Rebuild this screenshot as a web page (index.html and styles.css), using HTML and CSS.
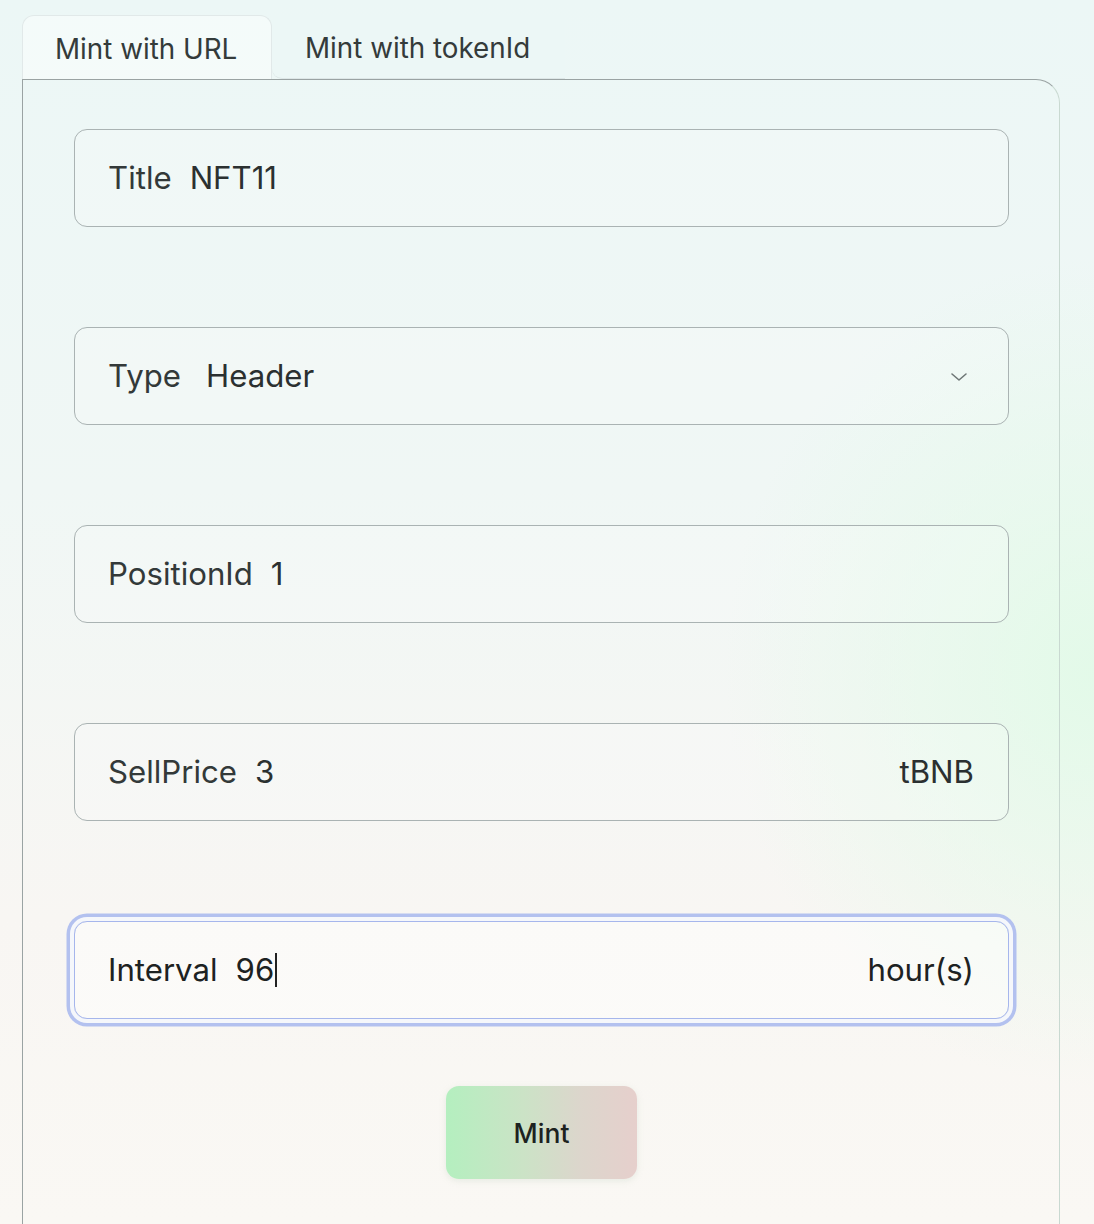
FILE: index.html
```html
<!DOCTYPE html>
<html lang="en">
<head>
<meta charset="utf-8">
<title>Mint</title>
<link rel="stylesheet" href="styles.css">
</head>
<body>
<div class="page">
  <div class="tabs">
    <div class="tab active">Mint with URL</div>
    <div class="tab">Mint with tokenId</div>
  </div>
  <div class="panel">
    <div class="field">
      <span class="label">Title</span>
      <span class="value">NFT11</span>
    </div>
    <div class="field">
      <span class="label">Type</span>
      <span class="value select-value">Header</span>
      <span class="spacer"></span>
      <svg class="chevron" width="18" height="10" viewBox="0 0 18 10"><path d="M2 2 L9 8 L16 2" fill="none" stroke="#6e7676" stroke-width="1.6" stroke-linecap="round" stroke-linejoin="round"/></svg>
    </div>
    <div class="field">
      <span class="label">PositionId</span>
      <span class="value">1</span>
    </div>
    <div class="field">
      <span class="label">SellPrice</span>
      <span class="value">3</span>
      <span class="spacer"></span>
      <span class="suffix">tBNB</span>
    </div>
    <div class="field focused">
      <span class="label">Interval</span>
      <span class="value">96</span><span class="caret"></span>
      <span class="spacer"></span>
      <span class="suffix">hour(s)</span>
    </div>
    <div class="actions">
      <button class="mint">Mint</button>
    </div>
  </div>
</div>
</body>
</html>
```

FILE: styles.css
```css
html, body {
  margin: 0;
  padding: 0;
  height: 100%;
}
body {
  font-family: Inter, "Noto Sans", sans-serif;
  color: #2b3030;
  background:
    radial-gradient(ellipse 45% 45% at 100% 55%, rgba(226, 250, 232, 0.95), rgba(226, 250, 232, 0) 75%),
    linear-gradient(180deg, #ecf7f6 0%, #f0f7f5 40%, #f8f6f3 75%, #faf8f4 100%);
  overflow: hidden;
}
.page {
  padding-top: 15px;
}
.tabs {
  display: flex;
  padding-left: 22px;
  height: 64px;
  position: relative;
  z-index: 1;
}
.tab {
  box-sizing: border-box;
  height: 64px;
  display: flex;
  align-items: center;
  font-size: 27.8px;
  color: #343b3b;
  padding-top: 2px;
}
.tab.active {
  width: 250px;
  padding-left: 32px;
  background: rgba(255, 255, 255, 0.45);
  border: 1px solid #e1e9e9;
  border-bottom: none;
  border-radius: 12px 12px 0 0;
}
.tab:not(.active) {
  width: 293px;
  padding-left: 33px;
  border-bottom: 1px solid #dde7e7;
  border-bottom-left-radius: 10px;
  margin-bottom: -1px;
  background: #ecf7f6;
}
.panel {
  box-sizing: border-box;
  margin-left: 22px;
  width: 1038px;
  min-height: 1200px;
  border: 1.5px solid #9aa3a3;
  border-right-color: #c9d9d1;
  border-bottom: none;
  border-top-right-radius: 24px;
  padding: 49px 50px 0 51px;
}
.field {
  box-sizing: border-box;
  height: 98px;
  margin-bottom: 100px;
  border: 1.5px solid #aab3b3;
  border-radius: 13px;
  display: flex;
  align-items: center;
  padding: 0 34px 0 33px;
  font-size: 31.2px;
  background: rgba(255, 255, 255, 0.18);
}
.label {
  color: #333939;
}
.value {
  margin-left: 18px;
  color: #2b3030;
}
.select-value {
  margin-left: 25px;
}
.spacer {
  flex: 1;
}
.chevron {
  margin-right: 6px;
  margin-top: 2px;
}
.suffix {
  color: #2b3030;
}
.field.focused {
  margin-bottom: 67px;
  border: 1.5px solid #a6b6ec;
  background: rgba(255, 255, 255, 0.45);
  box-shadow: 0 0 0 4px #f5f7fb, 0 0 0 7.5px #b3c1ef;
}
.field.focused .label,
.field.focused .value,
.field.focused .suffix {
  color: #1d2222;
}
.caret {
  display: inline-block;
  width: 1.5px;
  height: 34px;
  background: #222;
  margin-left: 1px;
}
.actions {
  display: flex;
  justify-content: center;
}
.mint {
  width: 191px;
  height: 93px;
  border: none;
  border-radius: 13px;
  background: linear-gradient(90deg, #b4efbf 0%, #cbe3c6 40%, #dcd6cc 70%, #e6cfcc 100%);
  font-family: Inter, "Noto Sans", sans-serif;
  font-size: 26.5px;
  font-weight: 500;
  color: #1c2220;
  box-shadow: 0 2px 6px rgba(180, 200, 180, 0.25);
  padding: 0;
}
```
